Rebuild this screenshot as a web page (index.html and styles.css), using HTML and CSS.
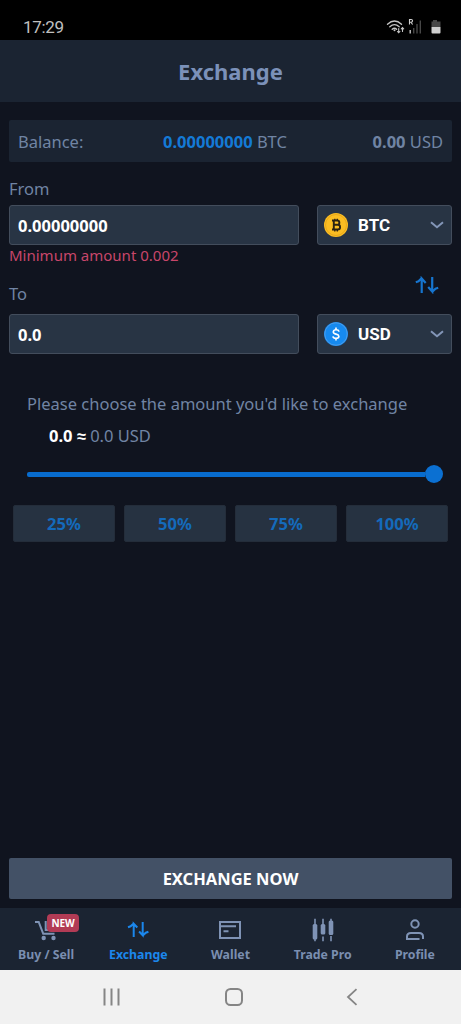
FILE: index.html
```html
<!DOCTYPE html>
<html lang="en">
<head>
<meta charset="utf-8">
<meta name="viewport" content="width=device-width, initial-scale=1">
<title>Exchange</title>
<link rel="stylesheet" href="styles.css">
</head>
<body>
<div class="status">
  <span class="time">17:29</span>
  <svg class="status-icons" width="56" height="18" viewBox="0 0 56 18" fill="none">
    <g stroke="#c6c6c6" stroke-width="1.3" stroke-linecap="round">
      <path d="M1.5 6.2Q8.5 -.2 15.500 6.200M3.800 8.800Q8.500 4.500 13.200 8.800M6.200 11.200Q8.500 9.200 10.600 11.200"/>
      <path d="M12.700 10.500v4M11.500 13.500l1.200 1.300 1.200-1.300M16.500 13.500v-3.800M15.300 10.800l1.200-1.300 1.200 1.300" stroke-width="1.100"/>
    </g>
    <circle cx="8.500" cy="12.300" r="1" fill="#c6c6c6"/>
    <path d="M23.500 6.500v-5h1.700a1.300 1.300 0 0 1 0 2.700h-1.700M25 4.200l1.600 2.300" stroke="#d0d0d0" stroke-width="1.100"/>
    <path d="M24.200 12v3.500" stroke="#c6c6c6" stroke-width="1.400"/>
    <path d="M27.700 10v5.500M31 6v9.500M34.300 2.500v13" stroke="#474747" stroke-width="1.400"/>
    <path d="M47 2h4v1.500h3.500V9h-9V3.500H47z" fill="#474747"/>
    <path d="M45.500 9h9v5.500q0 1-1 1h-7q-1 0-1-1z" fill="#cecece"/>
  </svg>
</div>
<header class="header"><h1>Exchange</h1></header>
<main class="main">
  <section class="balance">
    <span class="bal-label">Balance:</span>
    <span class="bal-crypto"><b>0.00000000</b> BTC</span>
    <span class="bal-fiat"><b>0.00</b> USD</span>
  </section>

  <label class="label label-from">From</label>
  <div class="row">
    <div class="field">0.00000000</div>
    <div class="select">
      <svg class="coin" width="26" height="26" viewBox="0 0 26 26" fill="none">
        <circle cx="13" cy="13" r="12" fill="#fbbd22"/>
        <circle cx="13" cy="13" r="10.500" stroke="#e9a91a" stroke-width="1"/>
        <path d="M9 8.500h5.200a2.100 2.100 0 0 1 0 4.300h-3.400M9 17.500h5.700a2.350 2.350 0 0 0 0-4.700M10.800 8.500v9" stroke="#2a2112" stroke-width="1.900"/>
        <path d="M11.800 6.700v2M14.300 6.700v2M11.800 17.500v2M14.300 17.500v2" stroke="#2a2112" stroke-width="1.300"/>
      </svg>
      <span class="code">BTC</span>
      <svg class="chevron" width="14" height="8" viewBox="0 0 14 8" fill="none"><path d="M1 1.200l6 5 6-5" stroke="#8396b8" stroke-width="2"/></svg>
    </div>
  </div>
  <p class="error">Minimum amount 0.002</p>

  <div class="to-row">
    <label class="label">To</label>
    <svg class="swap" width="24" height="18" viewBox="0 0 24 18" fill="none" stroke="#1675cf" stroke-width="2.200"><path d="M6.700 17V2.500L10.700 7M.8 6.200L3.500 5.300 6.300 2.500M17.200 1v14.500L13.200 11M23.200 11.800l-2.700.9-2.900 2.800"/></svg>
  </div>
  <div class="row">
    <div class="field">0.0</div>
    <div class="select">
      <svg class="coin" width="26" height="26" viewBox="0 0 26 26" fill="none">
        <circle cx="13" cy="13" r="12" fill="#168af0"/>
        <circle cx="13" cy="13" r="11.200" stroke="#4b9ce9" stroke-width="1"/>
        <path d="M16.100 10.600Q15.600 8.800 13.100 8.800T10.300 10.900Q10.300 12.500 13 13.100T15.900 15.300Q15.700 17.300 13 17.300T9.900 15.300M13 6.500v2.500M13 17v2.500" stroke="#fff" stroke-width="1.600"/>
      </svg>
      <span class="code">USD</span>
      <svg class="chevron" width="14" height="8" viewBox="0 0 14 8" fill="none"><path d="M1 1.200l6 5 6-5" stroke="#8396b8" stroke-width="2"/></svg>
    </div>
  </div>

  <section class="choose">
    <p class="prompt">Please choose the amount you'd like to exchange</p>
    <p class="amount"><b>0.0 ≈</b> 0.0 USD</p>
    <div class="slider"><div class="track"></div><div class="thumb"></div></div>
  </section>
  <div class="percents">
    <button>25%</button><button>50%</button><button>75%</button><button>100%</button>
  </div>
  <button class="submit"><span>EXCHANGE NOW</span></button>
</main>

<nav class="tabs">
  <a class="tab">
    <span class="icon-wrap">
      <svg width="24" height="24" viewBox="0 0 24 24" fill="none"><path d="M1 4h3.700l4.500 11.700H20.500M11.700 3v9H21" stroke="#7f93b5" stroke-width="2"/><circle cx="9.700" cy="20" r="2.200" fill="#7f93b5"/><circle cx="19.500" cy="20" r="2.200" fill="#7f93b5"/></svg>
      <span class="badge">NEW</span>
    </span>
    <span class="name n-buy">Buy / Sell</span>
  </a>
  <a class="tab active">
    <svg width="24" height="24" viewBox="0 0 24 24" fill="none" stroke="#1b87ec" stroke-width="2"><path d="M7.700 19V5.700L11.300 9.500M2 9.200l2.600-.9 2.800-2.600M16.700 4v13.300L13.100 13.500M22.400 13.800l-2.600.9-2.800 2.600"/></svg>
    <span class="name n-exchange">Exchange</span>
  </a>
  <a class="tab">
    <svg width="24" height="24" viewBox="0 0 24 24" fill="none" stroke="#7f93b5" stroke-width="2"><path d="M2 4h20v16H2zM2 8.300h16M5.500 13.300h5"/></svg>
    <span class="name n-wallet">Wallet</span>
  </a>
  <a class="tab">
    <svg width="24" height="24" viewBox="0 0 24 24" fill="#7f93b5"><path d="M3.200.7h1.600V7H3.200zM3.200 20h1.600v3.300H3.200zM11.200.7h1.600V7h-1.600zM11.200 18.500h1.600v4.800h-1.600zM19.200.7h1.600V4h-1.600zM19.200 18h1.600v5.300h-1.600z"/><rect x="1.700" y="6" width="4.600" height="15.500" rx="1.500"/><rect x="9.700" y="6" width="4.600" height="10.500" rx="1.500"/><rect x="17.700" y="2.500" width="4.600" height="14.500" rx="1.500"/></svg>
    <span class="name n-trade">Trade Pro</span>
  </a>
  <a class="tab">
    <svg width="24" height="24" viewBox="0 0 24 24" fill="none" stroke="#7f93b5" stroke-width="2"><circle cx="12" cy="6" r="3.700"/><path d="M4 21v-2.500q0-3.500 4-3.500h8q4 0 4 3.500V21M3 21h13.500"/></svg>
    <span class="name n-profile">Profile</span>
  </a>
</nav>
<div class="sysnav">
  <svg width="18" height="18" viewBox="0 0 18 18" stroke="#858585" stroke-width="2"><path d="M1.500 .5v17M8.500 .5v17M15.500 .5v17"/></svg>
  <svg width="20" height="20" viewBox="0 0 20 20" fill="none" stroke="#858585" stroke-width="2"><rect x="2" y="2" width="16" height="16" rx="4.500"/></svg>
  <svg width="12" height="18" viewBox="0 0 12 18" fill="none" stroke="#858585" stroke-width="1.800"><path d="M10.500 1.200L2 9l8.500 7.800"/></svg>
</div>
</body>
</html>
```

FILE: styles.css
```css
* { box-sizing: border-box; }
body {
  margin: 0;
  height: 1024px;
  display: flex;
  flex-direction: column;
  background: #10141f;
  color: #7084a4;
  font-family: "Noto Sans", sans-serif;
  font-size: 16.5px;
  overflow: hidden;
}
p, h1 { margin: 0; }
button { font-family: inherit; border: 0; padding: 0; }
svg { display: block; flex: none; }

.status {
  height: 40px;
  background: #000;
  display: flex;
  justify-content: space-between;
  align-items: flex-start;
  padding: 18px 19px 0 23px;
}
.time { font: 17px/18px Roboto, sans-serif; color: #c0c0c0; letter-spacing: -.3px; }
.header {
  height: 62px;
  background: #1b2432;
  display: flex;
  align-items: center;
  justify-content: center;
}
.header h1 { font-size: 22px; line-height: 30px; color: #7b91b9; }

.main { flex: 1; display: flex; flex-direction: column; padding: 18px 9px 9px; }
.balance {
  height: 42px;
  flex: none;
  background: #1b2432;
  border-radius: 2px;
  display: flex;
  align-items: center;
  padding: 0 9px;
}
.bal-label { width: 145px; }
.bal-crypto { flex: 1; }
.bal-crypto b { color: #147ad6; }
.label { line-height: 24px; }
.label-from { margin: 15px 0 4px; }
.row { display: flex; gap: 18px; height: 40px; flex: none; }
.field, .select {
  background: #283444;
  border: 1px solid #434d5c;
  border-radius: 3px;
  display: flex;
  align-items: center;
  color: #fff;
}
.field { width: 290px; padding-left: 8px; font-weight: 700; }
.select { width: 135px; padding: 0 7px 0 5px; }
.code { flex: 1; margin-left: 9px; font: 700 17px/20px Roboto, sans-serif; }
.error { color: #c8466a; font-size: 15px; line-height: 21px; }
.to-row {
  height: 48px;
  display: flex;
  justify-content: space-between;
  padding: 16px 13px 0 0;
}
.swap { margin-top: -6px; }
.choose { padding: 38px 9px 0 18px; }
.prompt { line-height: 24px; white-space: nowrap; }
.amount { line-height: 24px; margin: 8px 0 0 22px; }
.amount b { color: #fff; }
.slider { display: flex; align-items: center; height: 20px; margin-top: 16px; }
.track { flex: 1; height: 5px; border-radius: 2px 0 0 2px; background: #086cce; }
.thumb { width: 18px; height: 18px; border-radius: 50%; background: #0b70d2; }
.percents {
  display: grid;
  grid-template-columns: repeat(4, 1fr);
  gap: 9px;
  margin: 21px 4px 0;
}
.percents button {
  height: 37px;
  border: 1px solid #242d3a;
  border-radius: 2px;
  background: #263241;
  color: #146abb;
  font-size: 16.5px;
  font-weight: 700;
}
.submit {
  height: 41px;
  margin-top: auto;
  border-radius: 2px;
  background: #435166;
  color: #fff;
  font-size: 16.5px;
  font-weight: 700;
}

.tabs {
  height: 62px;
  flex: none;
  background: #1b2432;
  display: grid;
  grid-template-columns: repeat(5, 1fr);
}
.tab {
  display: flex;
  flex-direction: column;
  align-items: center;
  padding-top: 10px;
  color: #7a8eb0;
}
.active { color: #1b87ec; }
.icon-wrap { position: relative; }
.badge {
  position: absolute;
  left: 13px;
  top: -4px;
  width: 32px;
  height: 18px;
  border-radius: 4px;
  background: #b23b55;
  color: #fff;
  font-size: 10px;
  font-weight: 700;
  line-height: 18px;
  text-align: center;
}
.name { font-size: 12.3px; font-weight: 700; line-height: 18px; margin-top: 4px; white-space: nowrap; }
.sysnav {
  height: 54px;
  flex: none;
  background: #f1f1f1;
  display: flex;
  align-items: center;
  justify-content: space-between;
  padding: 0 103px;
}
```
